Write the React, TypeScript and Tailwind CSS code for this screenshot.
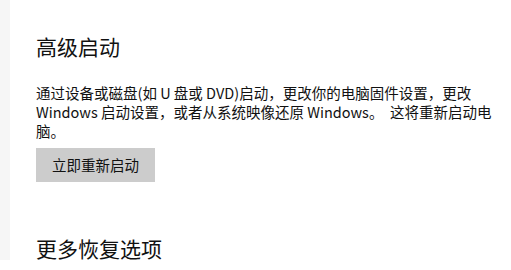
export default function App() {
  const font = { fontFamily: '"Noto Sans CJK SC", sans-serif' };

  return (
    <div className="flex h-[270px] w-[511px] overflow-hidden bg-white text-[#111111]" style={font}>
      {/* left nav edge */}
      <div className="h-[260px] w-[10px] shrink-0 bg-[#f6f6f6]" />

      <div className="flex flex-col pl-[26px] pt-[32px]">
        <h2 className="text-[21px] leading-[28px]">高级启动</h2>

        <p className="mt-[23px] text-[14.5px] leading-[19px]">
          <span className="block whitespace-pre">通过设备或磁盘(如 U 盘或 DVD)启动，更改你的电脑固件设置，更改</span>
          <span className="block whitespace-pre">Windows 启动设置，或者从系统映像还原 Windows。  这将重新启动电</span>
          <span className="block whitespace-pre">脑。</span>
        </p>

        <div className="mt-[8px]">
          <button
            type="button"
            className="h-[34px] w-[119px] bg-[#cccccc] text-[14.5px] leading-none text-[#111111]"
          >
            立即重新启动
          </button>
        </div>

        <h2 className="mt-[52px] text-[21px] leading-[28px]">更多恢复选项</h2>
      </div>
    </div>
  );
}
